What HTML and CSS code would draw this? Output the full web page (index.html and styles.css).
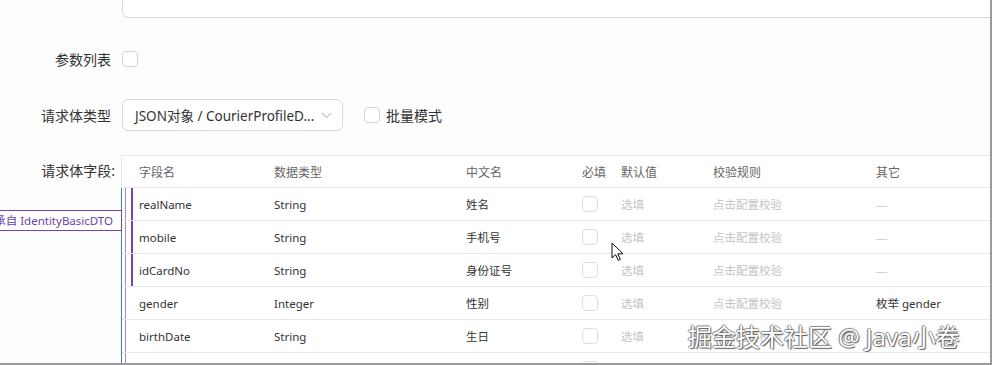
FILE: index.html
```html
<!DOCTYPE html>
<html lang="zh-CN">
<head>
  <meta charset="UTF-8" />
  <meta name="viewport" content="width=device-width, initial-scale=1.0"/>
  <title>请求体字段</title>
  <link rel="stylesheet" href="styles.css">
</head>
<body>
<div class="frame">

  <div class="form-row textarea-row">
    <div class="label"></div>
    <div class="textarea"></div>
  </div>

  <div class="form-row">
    <div class="label">参数列表</div>
    <span class="checkbox"></span>
  </div>

  <div class="form-row">
    <div class="label">请求体类型</div>
    <div class="select">
      <span>JSON对象 / CourierProfileD...</span>
      <svg class="chevron" width="11" height="7" viewBox="0 0 11 7"><path d="M1 1l4.5 4.5L10 1" fill="none" stroke="#c4c4c4" stroke-width="1.1"/></svg>
    </div>
    <label class="check-label"><span class="checkbox"></span>批量模式</label>
  </div>

  <div class="form-row table-row">
    <div class="label colon">请求体字段:</div>
    <div class="table-wrap">
      <div class="inherit-badge">继承自 IdentityBasicDTO</div>
      <div class="table">
        <div class="thead">
          <div class="trow">
            <div class="cell">字段名</div>
            <div class="cell">数据类型</div>
            <div class="cell">中文名</div>
            <div class="cell">必填</div>
            <div class="cell">默认值</div>
            <div class="cell">校验规则</div>
            <div class="cell">其它</div>
          </div>
        </div>
        <div class="tbody">
          <div class="group">
            <div class="trow">
              <div class="cell">realName</div>
              <div class="cell">String</div>
              <div class="cell">姓名</div>
              <div class="cell"><span class="checkbox light"></span></div>
              <div class="cell muted">选填</div>
              <div class="cell muted">点击配置校验</div>
              <div class="cell dash">—</div>
            </div>
            <div class="trow">
              <div class="cell">mobile</div>
              <div class="cell">String</div>
              <div class="cell">手机号</div>
              <div class="cell"><span class="checkbox light"></span></div>
              <div class="cell muted">选填</div>
              <div class="cell muted">点击配置校验</div>
              <div class="cell dash">—</div>
            </div>
            <div class="trow">
              <div class="cell">idCardNo</div>
              <div class="cell">String</div>
              <div class="cell">身份证号</div>
              <div class="cell"><span class="checkbox light"></span></div>
              <div class="cell muted">选填</div>
              <div class="cell muted">点击配置校验</div>
              <div class="cell dash">—</div>
            </div>
          </div>
          <div class="trow">
            <div class="cell">gender</div>
            <div class="cell">Integer</div>
            <div class="cell">性别</div>
            <div class="cell"><span class="checkbox light"></span></div>
            <div class="cell muted">选填</div>
            <div class="cell muted">点击配置校验</div>
            <div class="cell">枚举 gender</div>
          </div>
          <div class="trow">
            <div class="cell">birthDate</div>
            <div class="cell">String</div>
            <div class="cell">生日</div>
            <div class="cell"><span class="checkbox light"></span></div>
            <div class="cell muted">选填</div>
            <div class="cell muted">点击配置校验</div>
            <div class="cell dash">—</div>
          </div>
          <div class="trow">
            <div class="cell">avatar</div>
            <div class="cell">String</div>
            <div class="cell">头像</div>
            <div class="cell"><span class="checkbox light"></span></div>
            <div class="cell muted">选填</div>
            <div class="cell muted">点击配置校验</div>
            <div class="cell dash">—</div>
          </div>
        </div>
      </div>
    </div>
  </div>

  <div class="watermark">掘金技术社区 @ Java小卷</div>

  <svg class="cursor" width="13" height="20" viewBox="0 0 13 20">
    <path d="M1 1v15l3.6-3.4 2.6 5.8 2.2-1-2.6-5.6H12z" fill="#fff" stroke="#111" stroke-width="1" stroke-linejoin="round"/>
  </svg>

</div>
</body>
</html>
```

FILE: styles.css
```css
* {
  box-sizing: border-box;
}
body {
  margin: 0;
  font-family: 'Noto Sans', 'Noto Sans CJK SC', sans-serif;
  font-weight: 400;
  color: #333;
  background: #fdfdfd;
}
.frame {
  position: relative;
  width: 992px;
  height: 365px;
  overflow: hidden;
  border-right: 2px solid #9a9a9a;
  border-bottom: 2px solid #9a9a9a;
  background: #fdfdfd;
}
.form-row {
  display: flex;
  align-items: center;
  height: 32px;
  margin-bottom: 24px;
}
.label {
  width: 122px;
  flex: none;
  padding-right: 11px;
  text-align: right;
  font-size: 14px;
  color: #333;
}
.label.colon {
  padding-right: 7px;
  line-height: 32px;
}
.textarea-row {
  height: 18px;
  margin-bottom: 25px;
}
.textarea {
  flex: 1;
  height: 18px;
  margin-right: -10px;
  background: #fff;
  border: 1px solid #d9d9d9;
  border-top: none;
  border-radius: 0 0 6px 6px;
}
.checkbox {
  display: inline-block;
  width: 16px;
  height: 16px;
  background: #fff;
  border: 1px solid #d4d4d4;
  border-radius: 4px;
}
.checkbox.light {
  border-color: #dedede;
}
.select {
  display: flex;
  align-items: center;
  justify-content: space-between;
  width: 221px;
  height: 32px;
  padding: 0 10px 0 12px;
  background: #fff;
  border: 1px solid #d9d9d9;
  border-radius: 6px;
  font-size: 13.5px;
  color: #333;
}
.check-label {
  display: flex;
  align-items: center;
  gap: 6px;
  margin-left: 21px;
  font-size: 14px;
}
.table-row {
  align-items: flex-start;
  height: auto;
}
.table-wrap {
  position: relative;
  flex: 1;
  margin-right: -10px;
}
.table {
  background: #fff;
  border-top: 1px solid #e8e8e8;
  font-size: 11.5px;
}
.trow {
  display: grid;
  grid-template-columns: 152px 192px 116px 39px 92px 163px 1fr;
  align-items: center;
  height: 33px;
  border-bottom: 1px solid #e8e8e8;
}
.cell:first-child {
  padding-left: 17px;
}
.cell .checkbox {
  vertical-align: middle;
}
.thead .trow {
  height: 32px;
  margin-left: -1px;
  border-left: 1px solid #e8e8e8;
  color: #666;
  font-size: 12px;
}
.tbody {
  margin-left: -1px;
  border-left: 1px solid #3b7dd8;
  background-image: linear-gradient(90deg, transparent 3px, #a68ad0 3px, #a68ad0 4px, transparent 4px);
}
.group {
  background-image: linear-gradient(90deg, transparent 9px, #7b3fb5 9px, #7b3fb5 11px, transparent 11px);
}
.muted {
  color: #c4c4c4;
}
.dash {
  color: #cfcfcf;
}
.inherit-badge {
  position: absolute;
  right: 100%;
  top: 55px;
  height: 21px;
  line-height: 19px;
  padding: 0 8px;
  white-space: nowrap;
  font-size: 11.5px;
  color: #6b3fa6;
  background: #fff;
  border: 1px solid #7b3fb5;
}
.watermark {
  position: absolute;
  left: 688px;
  top: 321px;
  font-size: 24px;
  line-height: 32px;
  white-space: nowrap;
  color: #fff;
  text-shadow: 1px 1px 1px #555, -1px 0 1px #777, 0 -1px 1px #888;
}
.cursor {
  position: absolute;
  left: 611px;
  top: 242px;
}
```
